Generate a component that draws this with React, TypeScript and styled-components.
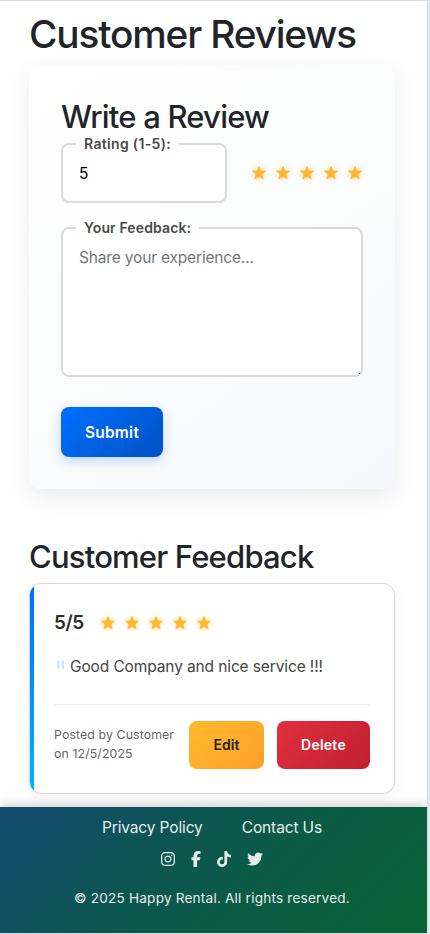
import React from "react";
import styled, { createGlobalStyle } from "styled-components";
import { FaFacebookF, FaInstagram, FaTiktok, FaTwitter } from "react-icons/fa6";

const GlobalStyle = createGlobalStyle`
  *, *::before, *::after { box-sizing: border-box; }
  body {
    margin: 0;
    background: #e2e6f0;
    font-family: Inter, "Liberation Sans", sans-serif;
    font-size: 16px;
    line-height: 1.5;
    color: #212529;
    overflow: hidden;
  }
  h1, h2, p { margin: 0; }
`;

const Page = styled.div`
  width: 428px;
  height: 934px;
  overflow: hidden;
  display: flex;
  flex-direction: column;
  background: #fff;
  border: solid #d9d9e0;
  border-width: 1px 1px 1px 0;
`;

const Main = styled.main`
  flex: none;
  height: 806px;
  padding: 8px 32px 0 29px;
  display: flex;
  flex-direction: column;
`;

const PageTitle = styled.h1`
  height: 48px;
  padding-top: 1px;
  font-size: 38.8px;
  line-height: 48px;
  font-weight: 500;
  letter-spacing: -1.15px;
  white-space: nowrap;
`;

const SectionTitle = styled.h2<{ $drop: number }>`
  height: 38px;
  padding-top: ${(p) => p.$drop}px;
  font-size: 31px;
  line-height: 38px;
  font-weight: 500;
  letter-spacing: -0.8px;
  white-space: nowrap;
`;

const ReviewForm = styled.form`
  margin: 8px 0 49px;
  height: 424px;
  padding: 32px;
  display: flex;
  flex-direction: column;
  align-items: flex-start;
  border-radius: 12px;
  background: linear-gradient(145deg, #ffffff, #fbfcfc 50%, #f6f8fb);
  box-shadow: 0 8px 24px rgba(0, 0, 0, 0.08);
`;

const RatingRow = styled.div`
  margin-top: 8px;
  width: 100%;
  display: flex;
  align-items: center;
  justify-content: space-between;
`;

const Field = styled.div<{ $width: number; $gap?: number }>`
  position: relative;
  width: ${(p) => p.$width}px;
  margin-top: ${(p) => p.$gap ?? 0}px;
  display: flex;
`;

const FieldLabel = styled.label<{ $width: number; $tracking: number }>`
  position: absolute;
  top: -10px;
  left: 15px;
  width: ${(p) => p.$width}px;
  height: 22px;
  padding-left: 8px;
  background: #fefefe;
  color: #4a4a4a;
  font-size: 14px;
  line-height: 22px;
  font-weight: 600;
  letter-spacing: ${(p) => p.$tracking}px;
  white-space: nowrap;
`;

const RatingInput = styled.input`
  width: 100%;
  height: 60px;
  padding: 0 16px;
  border: 2px solid #dadada;
  border-radius: 8px;
  background: #fff;
  font: 400 15.5px/24px Inter, sans-serif;
  color: #000;
  outline: none;
`;

const FeedbackInput = styled.textarea`
  width: 100%;
  height: 150px;
  padding: 17px 16px 16px;
  border: 2px solid #dadada;
  border-radius: 8px;
  background: #fff;
  font: 400 15.5px/24px Inter, sans-serif;
  letter-spacing: -0.17px;
  resize: none;
  outline: none;
  &::placeholder { color: #757575; }
`;

const ResizeGrip = styled.span`
  position: absolute;
  right: 3px;
  bottom: 3px;
  width: 1px;
  height: 1px;
  background: #333;
`;

const StarList = styled.div`
  display: flex;
  gap: 8px;
`;

const StarIcon = styled.svg`
  width: 16px;
  height: 16px;
  overflow: visible;
  fill: #ffb52e;
  stroke: #ffb52e;
  stroke-width: 0.8;
  stroke-linejoin: round;
  filter: drop-shadow(0 0 3px rgba(255, 181, 46, 0.4));
`;

const Button = styled.button<{ $kind: "primary" | "edit" | "danger" }>`
  flex: none;
  border: 0;
  padding: ${(p) => (p.$kind === "primary" ? "0" : "0 0 2px")};
  border-radius: 8px;
  font-family: inherit;
  font-weight: 600;
  width: ${(p) => ({ primary: 102, edit: 75, danger: 93 })[p.$kind]}px;
  height: ${(p) => (p.$kind === "primary" ? 50 : 48)}px;
  font-size: ${(p) => (p.$kind === "primary" ? 15.5 : 14)}px;
  letter-spacing: ${(p) => (p.$kind === "edit" ? 0.1 : 0.25)}px;
  color: ${(p) => (p.$kind === "edit" ? "#212529" : "#fff")};
  background: ${(p) =>
    ({
      primary: "linear-gradient(135deg, #006fff, #0052c2)",
      edit: "linear-gradient(135deg, #ffb92e, #ff9f29)",
      danger: "linear-gradient(135deg, #e03040, #c01f2f)",
    })[p.$kind]};
  box-shadow: ${(p) => (p.$kind === "primary" ? "0 4px 12px rgba(0, 111, 255, 0.25)" : "none")};
`;

const SubmitArea = styled.div`
  margin-top: 30px;
`;

const ReviewCard = styled.article`
  position: relative;
  margin-top: 7px;
  height: 211px;
  padding: 24px;
  display: flex;
  flex-direction: column;
  border: 1px solid #d6d8da;
  border-radius: 12px;
  background: #fff;
  box-shadow: 0 4px 16px rgba(0, 0, 0, 0.05);
`;

const AccentClip = styled.div`
  position: absolute;
  inset: 0;
  overflow: hidden;
  border-radius: 11px;
  &::before {
    content: "";
    display: block;
    width: 4px;
    height: 100%;
    background: linear-gradient(#006fff, #00b4ff);
  }
`;

const Score = styled.div`
  height: 30px;
  display: flex;
  align-items: center;
  gap: 16px;
`;

const ScoreValue = styled.span`
  width: 30px;
  font-size: 19px;
  font-weight: 600;
  letter-spacing: -0.4px;
  color: #2c2c2c;
  white-space: nowrap;
`;

const Quote = styled.p`
  margin-top: 15px;
  height: 27px;
  display: flex;
  align-items: center;
  font-size: 15.5px;
  line-height: 25px;
  color: #444;
  letter-spacing: -0.12px;
  white-space: nowrap;
`;

const QuoteMark = styled.svg`
  width: 16px;
  height: 27px;
  flex: none;
  fill: #cce2ff;
`;

const CardFooter = styled.div`
  margin-top: 24px;
  padding-top: 16px;
  border-top: 1px solid #e9e9e9;
  display: flex;
  align-items: center;
`;

const PostedBy = styled.p`
  width: 135px;
  padding-bottom: 2px;
  font-size: 12.3px;
  line-height: 19px;
  letter-spacing: 0.12px;
  color: #666;
  white-space: nowrap;
`;

const Actions = styled.div`
  display: flex;
  gap: 13px;
`;

const SiteFooter = styled.footer`
  position: relative;
  flex: none;
  height: 126px;
  display: flex;
  flex-direction: column;
  align-items: center;
  background: linear-gradient(135deg, #124a70 0%, #0d5650 40%, #086333 100%);
  box-shadow: 0 -2px 10px rgba(0, 0, 0, 0.2);
  color: #e6eeec;
`;

const FooterLinks = styled.nav`
  margin: 9px 3px 0 0;
  width: 220px;
  display: flex;
  justify-content: space-between;
`;

const FooterLink = styled.a`
  color: inherit;
  text-decoration: none;
  font-size: 15.5px;
  line-height: 24px;
  letter-spacing: -0.14px;
  white-space: nowrap;
`;

const Socials = styled.div`
  margin: 11px 3px 0 0;
  display: flex;
  gap: 16px;
`;

const SocialLink = styled.a<{ $width: number }>`
  display: flex;
  color: inherit;
  svg { width: ${(p) => p.$width}px; height: 16px; }
`;

const Copyright = styled.p`
  margin: 20px 3px 0 0;
  font-size: 13.6px;
  line-height: 22px;
  letter-spacing: 0.2px;
  white-space: nowrap;
`;

const Stars = () => (
  <StarList>
    {[1, 2, 3, 4, 5].map((n) => (
      <StarIcon key={n} viewBox="0 0 16 16">
        <path d="M8 1.5 9.8 5.9 14.7 6.2 10.9 9.3 12.2 14 8 11.4 3.8 14 5.1 9.3 1.3 6.2 6.2 5.9Z" />
      </StarIcon>
    ))}
  </StarList>
);

export default function App() {
  return (
    <>
      <GlobalStyle />
      <Page>
        <Main>
          <PageTitle>Customer Reviews</PageTitle>
          <ReviewForm>
            <SectionTitle $drop={1}>Write a Review</SectionTitle>
            <RatingRow>
              <Field $width={166}>
                <RatingInput id="rating" defaultValue="5" />
                <FieldLabel htmlFor="rating" $width={103} $tracking={0.33}>Rating (1-5):</FieldLabel>
              </Field>
              <Stars />
            </RatingRow>
            <Field $width={302} $gap={24}>
              <FeedbackInput id="feedback" placeholder="Share your experience..." />
              <FieldLabel htmlFor="feedback" $width={123} $tracking={0.13}>Your Feedback:</FieldLabel>
              <ResizeGrip />
            </Field>
            <SubmitArea>
              <Button type="button" $kind="primary">Submit</Button>
            </SubmitArea>
          </ReviewForm>
          <SectionTitle $drop={0}>Customer Feedback</SectionTitle>
          <ReviewCard>
            <AccentClip />
            <Score>
              <ScoreValue>5/5</ScoreValue>
              <Stars />
            </Score>
            <Quote>
              <QuoteMark viewBox="0 0 16 27">
                <path d="M3 7.5h2.6l-.3 8H3.3zM7.7 7.5h2.6l-.3 8H8z" />
              </QuoteMark>
              Good Company and nice service !!!
            </Quote>
            <CardFooter>
              <PostedBy>
                Posted by Customer
                <br />
                on 12/5/2025
              </PostedBy>
              <Actions>
                <Button type="button" $kind="edit">Edit</Button>
                <Button type="button" $kind="danger">Delete</Button>
              </Actions>
            </CardFooter>
          </ReviewCard>
        </Main>
        <SiteFooter>
          <FooterLinks>
            <FooterLink>Privacy Policy</FooterLink>
            <FooterLink>Contact Us</FooterLink>
          </FooterLinks>
          <Socials>
            <SocialLink $width={14}><FaInstagram /></SocialLink>
            <SocialLink $width={10}><FaFacebookF /></SocialLink>
            <SocialLink $width={14}><FaTiktok /></SocialLink>
            <SocialLink $width={16}><FaTwitter /></SocialLink>
          </Socials>
          <Copyright>© 2025 Happy Rental. All rights reserved.</Copyright>
        </SiteFooter>
      </Page>
    </>
  );
}
